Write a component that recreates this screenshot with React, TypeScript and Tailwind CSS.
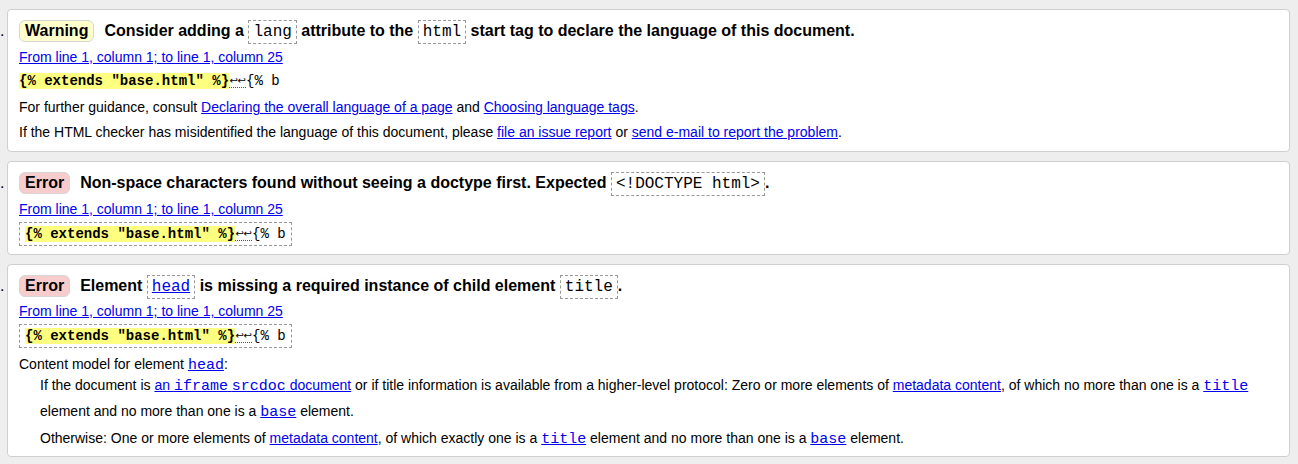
import React from "react";

const SANS = "font-['Liberation_Sans',Arial,Helvetica,sans-serif]";
const MONO = "font-['Liberation_Mono','Courier_New',monospace]";

function A({ children }: { children: React.ReactNode }) {
  return <a className="text-[#0000ee] underline">{children}</a>;
}

function M({ children }: { children: React.ReactNode }) {
  return <code className={`${MONO} text-[15px] leading-none`}>{children}</code>;
}

function Box({ children, link }: { children: React.ReactNode; link?: boolean }) {
  return (
    <code
      className={`${MONO} inline-block border border-dashed border-[#999] px-[4px] font-normal leading-[22px] text-[16px] ${
        link ? "text-[#0000ee] underline" : ""
      }`}
    >
      {children}
    </code>
  );
}

function Badge({ kind }: { kind: "Warning" | "Error" }) {
  return (
    <span
      className={`inline-block rounded-[6px] border border-[#d6d6d6] px-[5px] leading-[20px] mr-[10px] ${
        kind === "Warning" ? "bg-[#ffffcc]" : "bg-[#f6cccc]"
      }`}
    >
      {kind}
    </span>
  );
}

function Extract({ boxed }: { boxed?: boolean }) {
  return (
    <div className="flex">
      <code
        className={`${MONO} text-[14px] whitespace-pre leading-[20px] ${
          boxed ? "border border-dashed border-[#999] px-[5px] py-[1px]" : ""
        }`}
      >
        <b className="bg-[#ffff80] font-bold">{'{% extends "base.html" %}'}</b>
        <span className="inline-flex w-[17px] justify-center border-b border-dotted border-[#555] align-[1px] text-[10px] leading-[13px] font-['DejaVu_Sans',sans-serif]">
          <span className="w-[8px] text-center">↩</span>
          <span className="w-[8px] text-center">↩</span>
        </span>
        {"{% b"}
      </code>
    </div>
  );
}

function Marker() {
  return <div className="w-[7px] shrink-0 pt-[10px] text-[16px] leading-[24px]">.</div>;
}

function Card({ children, pb }: { children: React.ReactNode; pb: string }) {
  return (
    <div className={`flex-1 rounded-[4px] border border-[#cfcfcf] bg-white pl-[11px] pr-[11px] pt-[9px] ${pb}`}>
      {children}
    </div>
  );
}

function Heading({ children }: { children: React.ReactNode }) {
  return <div className="text-[16px] font-bold leading-[24px] h-[24px] whitespace-nowrap">{children}</div>;
}

function L({ children }: { children: React.ReactNode }) {
  return (
    <a className="text-[#0000ee] underline">
      <M>{children}</M>
    </a>
  );
}

export default function App() {
  return (
    <div className={`${SANS} min-h-screen bg-[#eeeeee] pt-[9px] pr-[8px] text-[14px] text-black`}>
      <div className="flex flex-col gap-[9px]">
        <div className="flex">
          <Marker />
          <Card pb="pb-[9px]">
            <Heading>
              <Badge kind="Warning" />
              Consider adding a <Box>lang</Box> attribute to the <Box>html</Box> start tag to declare the
              language of this document.
            </Heading>
            <p className="mt-[4px] leading-[20px]">
              <A>From line 1, column 1; to line 1, column 25</A>
            </p>
            <div className="mt-[4px]">
              <Extract />
            </div>
            <p className="mt-[6px] leading-[20px]">
              For further guidance, consult <A>Declaring the overall language of a page</A> and{" "}
              <A>Choosing language tags</A>.
            </p>
            <p className="mt-[5px] leading-[20px]">
              If the HTML checker has misidentified the language of this document, please{" "}
              <A>file an issue report</A> or <A>send e-mail to report the problem</A>.
            </p>
          </Card>
        </div>

        <div className="flex">
          <Marker />
          <Card pb="pb-[8px]">
            <Heading>
              <Badge kind="Error" />
              Non-space characters found without seeing a doctype first. Expected{" "}
              <Box>{"<!DOCTYPE html>"}</Box>.
            </Heading>
            <p className="mt-[4px] leading-[20px]">
              <A>From line 1, column 1; to line 1, column 25</A>
            </p>
            <div className="mt-[3px]">
              <Extract boxed />
            </div>
          </Card>
        </div>

        <div className="flex">
          <Marker />
          <Card pb="pb-[5px]">
            <Heading>
              <Badge kind="Error" />
              Element <Box link>head</Box> is missing a required instance of child element{" "}
              <Box>title</Box>.
            </Heading>
            <p className="mt-[3px] leading-[20px]">
              <A>From line 1, column 1; to line 1, column 25</A>
            </p>
            <div className="mt-[3px]">
              <Extract boxed />
            </div>
            <p className="mt-[6px] leading-[20px]">
              Content model for element <L>head</L>:
            </p>
            <div className="ml-[21px] mt-[-2px]">
              <p className="leading-[26px]">
                If the document is{" "}
                <a className="text-[#0000ee] underline">
                  an <M>iframe</M> <M>srcdoc</M> document
                </a>{" "}
                or if title information is available from a higher-level protocol: Zero or more elements of{" "}
                <A>metadata content</A>, of which no more than one is a <L>title</L> element and no more than
                one is a <L>base</L> element.
              </p>
              <p className="mt-[1px] leading-[26px]">
                Otherwise: One or more elements of <A>metadata content</A>, of which exactly one is a{" "}
                <L>title</L> element and no more than one is a <L>base</L> element.
              </p>
            </div>
          </Card>
        </div>
      </div>
    </div>
  );
}
